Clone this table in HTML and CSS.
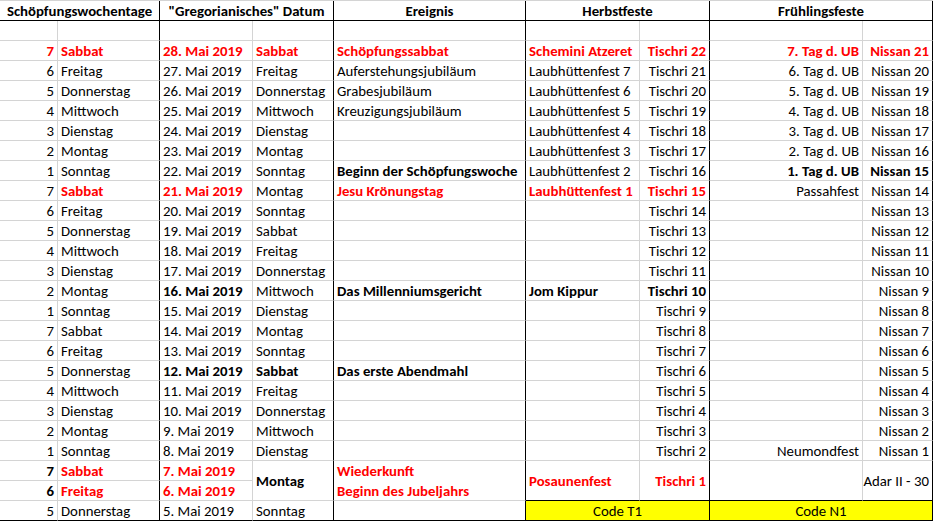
FILE: index.html
```html
<!DOCTYPE html>
<html lang="de">
<head>
<meta charset="utf-8">
<title>Schöpfungswoche</title>
<link rel="stylesheet" href="styles.css">
</head>
<body>
<div class="sheet">
  <div class="c hd bk ctr s2">Schöpfungswochentage</div>
  <div class="c hd bk ctr s2">"Gregorianisches" Datum</div>
  <div class="c hd bk ctr">Ereignis</div>
  <div class="c hd bk ctr s2">Herbstfeste</div>
  <div class="c hd bk ctr s2">Frühlingsfeste</div>

  <div class="c"></div><div class="c bk"></div><div class="c"></div><div class="c bk"></div><div class="c bk"></div><div class="c"></div><div class="c bk"></div><div class="c"></div><div class="c bk"></div>

  <div class="c r rb">7</div><div class="c bk rb">Sabbat</div><div class="c rb">28. Mai 2019</div><div class="c bk rb">Sabbat</div><div class="c bk rb">Schöpfungssabbat</div><div class="c rb">Schemini Atzeret</div><div class="c bk r rb">Tischri 22</div><div class="c r rb">7. Tag d. UB</div><div class="c bk r rb">Nissan 21</div>

  <div class="c r">6</div><div class="c bk">Freitag</div><div class="c">27. Mai 2019</div><div class="c bk">Freitag</div><div class="c bk">Auferstehungsjubiläum</div><div class="c">Laubhüttenfest 7</div><div class="c bk r">Tischri 21</div><div class="c r">6. Tag d. UB</div><div class="c bk r">Nissan 20</div>

  <div class="c r">5</div><div class="c bk">Donnerstag</div><div class="c">26. Mai 2019</div><div class="c bk">Donnerstag</div><div class="c bk">Grabesjubiläum</div><div class="c">Laubhüttenfest 6</div><div class="c bk r">Tischri 20</div><div class="c r">5. Tag d. UB</div><div class="c bk r">Nissan 19</div>

  <div class="c r">4</div><div class="c bk">Mittwoch</div><div class="c">25. Mai 2019</div><div class="c bk">Mittwoch</div><div class="c bk">Kreuzigungsjubiläum</div><div class="c">Laubhüttenfest 5</div><div class="c bk r">Tischri 19</div><div class="c r">4. Tag d. UB</div><div class="c bk r">Nissan 18</div>

  <div class="c r">3</div><div class="c bk">Dienstag</div><div class="c">24. Mai 2019</div><div class="c bk">Dienstag</div><div class="c bk"></div><div class="c">Laubhüttenfest 4</div><div class="c bk r">Tischri 18</div><div class="c r">3. Tag d. UB</div><div class="c bk r">Nissan 17</div>

  <div class="c r">2</div><div class="c bk">Montag</div><div class="c">23. Mai 2019</div><div class="c bk">Montag</div><div class="c bk"></div><div class="c">Laubhüttenfest 3</div><div class="c bk r">Tischri 17</div><div class="c r">2. Tag d. UB</div><div class="c bk r">Nissan 16</div>

  <div class="c r">1</div><div class="c bk">Sonntag</div><div class="c">22. Mai 2019</div><div class="c bk">Sonntag</div><div class="c bk b">Beginn der Schöpfungswoche</div><div class="c">Laubhüttenfest 2</div><div class="c bk r">Tischri 16</div><div class="c r b">1. Tag d. UB</div><div class="c bk r b">Nissan 15</div>

  <div class="c r">7</div><div class="c bk rb">Sabbat</div><div class="c rb">21. Mai 2019</div><div class="c bk">Montag</div><div class="c bk rb">Jesu Krönungstag</div><div class="c rb">Laubhüttenfest 1</div><div class="c bk r rb">Tischri 15</div><div class="c r">Passahfest</div><div class="c bk r">Nissan 14</div>

  <div class="c r">6</div><div class="c bk">Freitag</div><div class="c">20. Mai 2019</div><div class="c bk">Sonntag</div><div class="c bk"></div><div class="c"></div><div class="c bk r">Tischri 14</div><div class="c r"></div><div class="c bk r">Nissan 13</div>

  <div class="c r">5</div><div class="c bk">Donnerstag</div><div class="c">19. Mai 2019</div><div class="c bk">Sabbat</div><div class="c bk"></div><div class="c"></div><div class="c bk r">Tischri 13</div><div class="c r"></div><div class="c bk r">Nissan 12</div>

  <div class="c r">4</div><div class="c bk">Mittwoch</div><div class="c">18. Mai 2019</div><div class="c bk">Freitag</div><div class="c bk"></div><div class="c"></div><div class="c bk r">Tischri 12</div><div class="c r"></div><div class="c bk r">Nissan 11</div>

  <div class="c r">3</div><div class="c bk">Dienstag</div><div class="c">17. Mai 2019</div><div class="c bk">Donnerstag</div><div class="c bk"></div><div class="c"></div><div class="c bk r">Tischri 11</div><div class="c r"></div><div class="c bk r">Nissan 10</div>

  <div class="c r">2</div><div class="c bk">Montag</div><div class="c b">16. Mai 2019</div><div class="c bk">Mittwoch</div><div class="c bk b">Das Millenniumsgericht</div><div class="c b">Jom Kippur</div><div class="c bk r b">Tischri 10</div><div class="c r"></div><div class="c bk r">Nissan 9</div>

  <div class="c r">1</div><div class="c bk">Sonntag</div><div class="c">15. Mai 2019</div><div class="c bk">Dienstag</div><div class="c bk"></div><div class="c"></div><div class="c bk r">Tischri 9</div><div class="c r"></div><div class="c bk r">Nissan 8</div>

  <div class="c r">7</div><div class="c bk">Sabbat</div><div class="c">14. Mai 2019</div><div class="c bk">Montag</div><div class="c bk"></div><div class="c"></div><div class="c bk r">Tischri 8</div><div class="c r"></div><div class="c bk r">Nissan 7</div>

  <div class="c r">6</div><div class="c bk">Freitag</div><div class="c">13. Mai 2019</div><div class="c bk">Sonntag</div><div class="c bk"></div><div class="c"></div><div class="c bk r">Tischri 7</div><div class="c r"></div><div class="c bk r">Nissan 6</div>

  <div class="c r">5</div><div class="c bk">Donnerstag</div><div class="c b">12. Mai 2019</div><div class="c bk b">Sabbat</div><div class="c bk b">Das erste Abendmahl</div><div class="c"></div><div class="c bk r">Tischri 6</div><div class="c r"></div><div class="c bk r">Nissan 5</div>

  <div class="c r">4</div><div class="c bk">Mittwoch</div><div class="c">11. Mai 2019</div><div class="c bk">Freitag</div><div class="c bk"></div><div class="c"></div><div class="c bk r">Tischri 5</div><div class="c r"></div><div class="c bk r">Nissan 4</div>

  <div class="c r">3</div><div class="c bk">Dienstag</div><div class="c">10. Mai 2019</div><div class="c bk">Donnerstag</div><div class="c bk"></div><div class="c"></div><div class="c bk r">Tischri 4</div><div class="c r"></div><div class="c bk r">Nissan 3</div>

  <div class="c r">2</div><div class="c bk">Montag</div><div class="c">9. Mai 2019</div><div class="c bk">Mittwoch</div><div class="c bk"></div><div class="c"></div><div class="c bk r">Tischri 3</div><div class="c r"></div><div class="c bk r">Nissan 2</div>

  <div class="c r">1</div><div class="c bk">Sonntag</div><div class="c">8. Mai 2019</div><div class="c bk">Dienstag</div><div class="c bk"></div><div class="c"></div><div class="c bk r">Tischri 2</div><div class="c r">Neumondfest</div><div class="c bk r">Nissan 1</div>

  <div class="c r b">7</div><div class="c bk rb">Sabbat</div><div class="c rb">7. Mai 2019</div><div class="c bk b v2">Montag</div><div class="c bk rb v2 lines">Wiederkunft<br>Beginn des Jubeljahrs</div><div class="c rb v2 bb">Posaunenfest</div><div class="c bk r rb v2 bb">Tischri 1</div><div class="c r v2 bb"></div><div class="c bk r v2 bb">Adar II - 30</div>
  <div class="c r b">6</div><div class="c bk rb">Freitag</div><div class="c rb">6. Mai 2019</div>

  <div class="c r last">5</div><div class="c bk last">Donnerstag</div><div class="c last">5. Mai 2019</div><div class="c bk last">Sonntag</div><div class="c bk last"></div><div class="c bk ctr last code s2">Code T1</div><div class="c bk ctr last code s2">Code N1</div>
</div>
</body>
</html>
```

FILE: styles.css
```css
html, body {
  margin: 0;
  padding: 0;
  background: #ffffff;
}

.sheet {
  display: grid;
  grid-template-columns: 58px 102px 93px 81px 192px 114px 70px 153px 70px;
  grid-auto-rows: 20px;
  width: 933px;
  border-top: 1px solid #d4d4d4;
  font-family: Carlito, Calibri, Lato, "Liberation Sans", sans-serif;
  font-size: 14.8px;
  color: #000000;
}

.c {
  box-sizing: border-box;
  border-right: 1px solid #d4d4d4;
  border-bottom: 1px solid #d4d4d4;
  padding: 1px 3px 0 3px;
  line-height: 19px;
  white-space: nowrap;
  overflow: hidden;
}

.bk { border-right-color: #000000; }
.hd { border-bottom-color: #000000; font-weight: bold; }
.last { border-bottom-color: #000000; }
.bb { border-bottom-color: #000000; }

.s2 { grid-column: span 2; }
.v2 {
  grid-row: span 2;
  display: flex;
  align-items: center;
}
.v2.r { justify-content: flex-end; }
.lines { line-height: 20px; }

.r { text-align: right; }
.ctr { text-align: center; }
.b { font-weight: bold; }
.rb { font-weight: bold; color: #ff0000; }
.code { background: #ffff00; }
```
